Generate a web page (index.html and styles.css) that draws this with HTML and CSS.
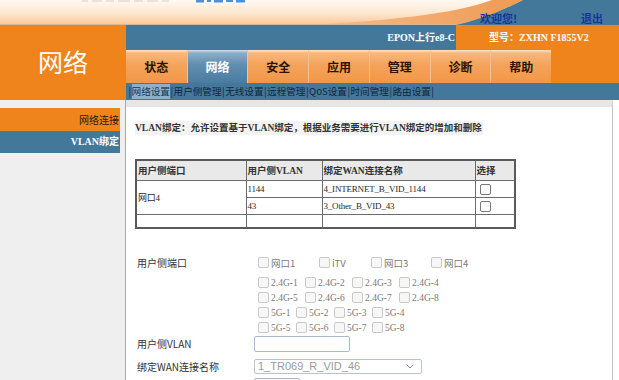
FILE: index.html
```html
<!DOCTYPE html>
<html lang="zh-CN">
<head>
<meta charset="utf-8">
<title>网络 - VLAN绑定</title>
<link rel="stylesheet" href="styles.css">
</head>
<body>
<div class="page">
  <header class="top">
    <svg class="top-art" width="619" height="25" viewBox="0 0 619 25" aria-hidden="true">
      <defs>
        <linearGradient id="sky" x1="0" y1="0" x2="0" y2="1">
          <stop offset="0" stop-color="#fffaf4"/>
          <stop offset="0.55" stop-color="#fde6cf"/>
          <stop offset="1" stop-color="#f8c595"/>
        </linearGradient>
        <linearGradient id="band" x1="0" y1="0" x2="1" y2="0">
          <stop offset="0" stop-color="#f7c091"/>
          <stop offset="1" stop-color="#ee9a52"/>
        </linearGradient>
      </defs>
      <rect x="0" y="0" width="619" height="25" fill="url(#sky)"/>
      <g fill="#ece2d6">
        <rect x="82" y="0" width="6" height="2"/><rect x="92" y="0" width="10" height="2"/>
        <rect x="106" y="0" width="8" height="2"/><rect x="118" y="0" width="12" height="2"/>
        <rect x="134" y="0" width="9" height="2"/><rect x="147" y="0" width="11" height="2"/>
        <rect x="162" y="0" width="7" height="2"/>
      </g>
      <g fill="#4a90dc">
        <rect x="196" y="0" width="8" height="2.5"/><rect x="207" y="0" width="4" height="2"/>
        <rect x="214" y="0" width="9" height="2.5"/><rect x="226" y="0" width="7" height="2"/>
        <rect x="236" y="0" width="9" height="2.5"/>
      </g>
      <path d="M300 25 C380 22 455 14 492 0 L523 0 C500 12 472 22 456 25 Z" fill="url(#band)"/>
      <path d="M523 0 L619 0 L619 25 L456 25 C472 22 500 12 523 0 Z" fill="#44789a"/>
      <rect x="0" y="24" width="456" height="1" fill="#d9b89a"/>
    </svg>
    <div class="welcome"><span class="hello">欢迎您!</span><a class="logout" href="#">退出</a></div>
  </header>

  <div class="band">
    <div class="logo">网络</div>
    <div class="band-right">
      <div class="info-row">
        <div class="epon">EPON上行e8-C</div>
        <div class="model">型号：ZXHN F1855V2</div>
      </div>
      <div class="tab-row">
        <nav class="tabs">
          <a class="tab" href="#">状态</a>
          <a class="tab active" href="#">网络</a>
          <a class="tab" href="#">安全</a>
          <a class="tab" href="#">应用</a>
          <a class="tab" href="#">管理</a>
          <a class="tab" href="#">诊断</a>
          <a class="tab" href="#">帮助</a>
        </nav>
        <div class="tab-fill"></div>
      </div>
      <div class="submenu">
        <span class="sep">|</span><a class="sub current" href="#">网络设置</a><span class="sep">|</span><a class="sub" href="#">用户侧管理</a><span class="sep">|</span><a class="sub" href="#">无线设置</a><span class="sep">|</span><a class="sub" href="#">远程管理</a><span class="sep">|</span><a class="sub" href="#">QoS设置</a><span class="sep">|</span><a class="sub" href="#">时间管理</a><span class="sep">|</span><a class="sub" href="#">路由设置</a><span class="sep">|</span>
      </div>
    </div>
  </div>

  <div class="body">
    <aside class="side">
      <div class="side-item net">网络连接</div>
      <div class="side-item vlan">VLAN绑定</div>
    </aside>
    <main class="main">
      <div class="desc">VLAN绑定：允许设置基于VLAN绑定，根据业务需要进行VLAN绑定的增加和删除</div>

      <table class="vtable">
        <colgroup>
          <col class="c1"><col class="c2"><col class="c3"><col class="c4">
        </colgroup>
        <thead>
          <tr><th>用户侧端口</th><th>用户侧VLAN</th><th>绑定WAN连接名称</th><th>选择</th></tr>
        </thead>
        <tbody>
          <tr><td rowspan="2">网口4</td><td>1144</td><td>4_INTERNET_B_VID_1144</td><td><input class="pick" type="checkbox"></td></tr>
          <tr><td>43</td><td>3_Other_B_VID_43</td><td><input class="pick" type="checkbox"></td></tr>
          <tr class="empty"><td></td><td></td><td></td><td></td></tr>
        </tbody>
      </table>

      <div class="form">
        <div class="frow ports">
          <div class="flabel">用户侧端口</div>
          <div class="fctl">
            <div class="cbline lan">
              <label class="item"><input class="cb" type="checkbox" disabled>网口1</label>
              <label class="item"><input class="cb" type="checkbox" disabled>iTV</label>
              <label class="item"><input class="cb" type="checkbox" disabled>网口3</label>
              <label class="item"><input class="cb" type="checkbox" disabled>网口4</label>
            </div>
            <div class="cbline g24 first">
              <label class="item"><input class="cb" type="checkbox" disabled>2.4G-1</label>
              <label class="item"><input class="cb" type="checkbox" disabled>2.4G-2</label>
              <label class="item"><input class="cb" type="checkbox" disabled>2.4G-3</label>
              <label class="item"><input class="cb" type="checkbox" disabled>2.4G-4</label>
            </div>
            <div class="cbline g24">
              <label class="item"><input class="cb" type="checkbox" disabled>2.4G-5</label>
              <label class="item"><input class="cb" type="checkbox" disabled>2.4G-6</label>
              <label class="item"><input class="cb" type="checkbox" disabled>2.4G-7</label>
              <label class="item"><input class="cb" type="checkbox" disabled>2.4G-8</label>
            </div>
            <div class="cbline g5">
              <label class="item"><input class="cb" type="checkbox" disabled>5G-1</label>
              <label class="item"><input class="cb" type="checkbox" disabled>5G-2</label>
              <label class="item"><input class="cb" type="checkbox" disabled>5G-3</label>
              <label class="item"><input class="cb" type="checkbox" disabled>5G-4</label>
            </div>
            <div class="cbline g5">
              <label class="item"><input class="cb" type="checkbox" disabled>5G-5</label>
              <label class="item"><input class="cb" type="checkbox" disabled>5G-6</label>
              <label class="item"><input class="cb" type="checkbox" disabled>5G-7</label>
              <label class="item"><input class="cb" type="checkbox" disabled>5G-8</label>
            </div>
          </div>
        </div>
        <div class="frow vlanrow">
          <div class="flabel">用户侧VLAN</div>
          <div class="fctl"><input class="vlan-input" type="text"></div>
        </div>
        <div class="frow wanrow">
          <div class="flabel">绑定WAN连接名称</div>
          <div class="fctl">
            <div class="select">
              <span class="select-text">1_TR069_R_VID_46</span>
              <svg class="chev" width="8" height="5" viewBox="0 0 8 5" aria-hidden="true"><path d="M0.5 0.5 L4 4 L7.5 0.5" fill="none" stroke="#8a8a8a" stroke-width="1"/></svg>
            </div>
          </div>
        </div>
        <div class="frow btnrow">
          <div class="flabel"></div>
          <div class="fctl"><div class="btn"></div></div>
        </div>
      </div>
    </main>
  </div>
</div>
</body>
</html>
```

FILE: styles.css
```css
* { box-sizing: border-box; }
html, body { margin: 0; padding: 0; }
body {
  width: 619px;
  height: 380px;
  overflow: hidden;
  background: #fff;
  font-family: "Liberation Serif", "Noto Sans CJK SC", serif;
  font-size: 10px;
  color: #222;
}
a { color: inherit; text-decoration: none; }

/* ---------- top strip ---------- */
.top {
  position: relative;
  height: 25px;
  display: flex;
  justify-content: flex-end;
  align-items: flex-end;
  overflow: hidden;
}
.top-art { position: absolute; left: 0; top: 0; }
.welcome {
  position: relative;
  display: flex;
  padding: 0 16px 0 0;
  font: bold 11px/14px "Noto Sans CJK SC", sans-serif;
  color: #16349a;
}
.hello { margin-right: 64px; }

/* ---------- header band ---------- */
.band { display: flex; height: 75px; }
.logo {
  width: 126px;
  flex: none;
  background: #f0841c;
  color: #fff;
  font: 25px/30px "Noto Sans CJK SC", sans-serif;
  text-align: center;
  padding-top: 21px;
}
.band-right { flex: 1; display: flex; flex-direction: column; }
.info-row {
  height: 25px;
  display: flex;
  background: #44789a;
  color: #fff;
  font-weight: bold;
  line-height: 25px;
}
.epon { flex: 1; text-align: right; padding-right: 1px; }
.model { width: 163px; background: #f0841c; padding-left: 33px; }

.tab-row { height: 33px; display: flex; }
.tabs {
  display: grid;
  grid-template-columns: repeat(7, 1fr);
  width: 425px;
}
.tab {
  display: flex;
  align-items: center;
  justify-content: center;
  background: linear-gradient(#fde7d2 0, #f7b87d 9%, #f4a35b 45%, #f29647 100%);
  color: #2a1400;
  font: bold 12px/1 "Noto Sans CJK SC", sans-serif;
  border-left: 1px solid #f6c094;
}
.tab:first-child { border-left: 0; }
.tab.active {
  background: linear-gradient(#d3e0ea 0, #8eadc6 9%, #608db0 45%, #4a7c9f 100%);
  color: #fff;
}
.tab-fill { flex: 1; background: #f0841c; }

.submenu {
  height: 17px;
  background: #44789a;
  display: flex;
  align-items: center;
  padding-left: 2px;
  font-family: "Noto Sans CJK SC", sans-serif;
  font-size: 9.6px;
  line-height: 15px;
  color: #10263c;
}
.sep { margin: 0 0.5px; }
.sub.current { color: #1a3550; background: #8db0c9; }

/* ---------- body ---------- */
.body { display: flex; height: 280px; }
.side {
  width: 126px;
  flex: none;
  background: #efefef;
  border-right: 1px solid #a8a8a8;
  padding-top: 8px;
}
.side-item {
  width: 120px;
  height: 23px;
  line-height: 23px;
  text-align: right;
  padding-right: 1px;
  font-family: "Noto Sans CJK SC", sans-serif;
  font-size: 10px;
}
.side-item.net { background: #f0841c; color: #1e1e1e; }
.side-item.vlan {
  background: #44789a;
  color: #fff;
  font-weight: bold;
  height: 22px;
  line-height: 22px;
  font-family: "Liberation Serif", "Noto Sans CJK SC", serif;
}

.main {
  flex: 1;
  margin-right: 6px;
  border-top: 7px solid #e6e6e6;
  border-right: 1px solid #c4c4c4;
  padding: 14px 0 0 9px;
}
.desc {
  display: inline-block;
  font-weight: bold;
  font-size: 9.5px;
  color: #333;
  line-height: 14px;
  background: #f3f3f3;
  padding: 0 1px 0 0;
}

/* ---------- table ---------- */
.vtable {
  margin-top: 24px;
  border-collapse: collapse;
  border: 2px solid #5a5a5a;
  width: 379px;
  table-layout: fixed;
}
.c1 { width: 110px; }
.c2 { width: 76px; }
.c3 { width: 153px; }
.c4 { width: 40px; }
.vtable th, .vtable td {
  border: 1px solid #6c6c6c;
  padding: 0 1px;
  text-align: left;
  font-size: 9px;
  color: #2a2a2a;
}
.vtable td { letter-spacing: -0.2px; }
.vtable th {
  background: #e9e9e9;
  height: 20px;
  font-size: 9.5px;
  font-weight: bold;
  color: #333;
}
.vtable td { height: 17px; }
.vtable tr.empty td { height: 14px; }
.pick {
  appearance: none;
  width: 11px;
  height: 11px;
  margin: 2px 0 0 3px;
  border: 1px solid #7a7a7a;
  border-radius: 2px;
  background: #fff;
  vertical-align: middle;
}

/* ---------- form ---------- */
.form { margin-top: 26px; padding-left: 2px; }
.frow { display: flex; }
.flabel {
  width: 117px;
  flex: none;
  font-family: "Noto Sans CJK SC", sans-serif;
  font-size: 10px;
  line-height: 15px;
  color: #333;
}
.fctl { display: flex; flex-direction: column; }
.cbline {
  height: 15px;
  display: grid;
  align-items: center;
  padding-left: 4px;
  color: #7a7a7a;
  font-size: 9.5px;
}
.cbline.lan { grid-template-columns: 61px 52px 60px auto; font-family: "Noto Sans CJK SC", "Liberation Serif", sans-serif; }
.cbline.g24 { grid-template-columns: repeat(4, 47px); }
.cbline.g24.first { margin-top: 5px; }
.cbline.g5 { grid-template-columns: repeat(4, 38px); }
.item { display: flex; align-items: center; white-space: nowrap; }
.cb {
  appearance: none;
  width: 11px;
  height: 11px;
  margin: 0 2px 0 0;
  border: 1px solid #c9c9c9;
  border-radius: 2px;
  background: #f7f7f7;
  flex: none;
}

.vlanrow { margin-top: 1px; }
.vlanrow .flabel { line-height: 16px; }
.vlan-input {
  width: 96px;
  height: 16px;
  margin: 0;
  border: 1px solid #a9b9cf;
  border-radius: 2px;
  background: #fff;
}
.wanrow { margin-top: 7px; }
.wanrow .flabel { line-height: 15px; }
.select {
  width: 168px;
  height: 15px;
  border: 1px solid #b7c2d2;
  border-radius: 2px;
  background: #fff;
  display: flex;
  align-items: center;
  justify-content: space-between;
  padding: 0 7px 0 3px;
}
.select-text {
  font: 11px/13px "Liberation Sans", sans-serif;
  color: #9a9a9a;
}
.btnrow { margin-top: 4px; }
.btn {
  width: 46px;
  height: 18px;
  border: 1px solid #b0b8c4;
  border-radius: 2px;
  background: #f4f4f4;
}
```
